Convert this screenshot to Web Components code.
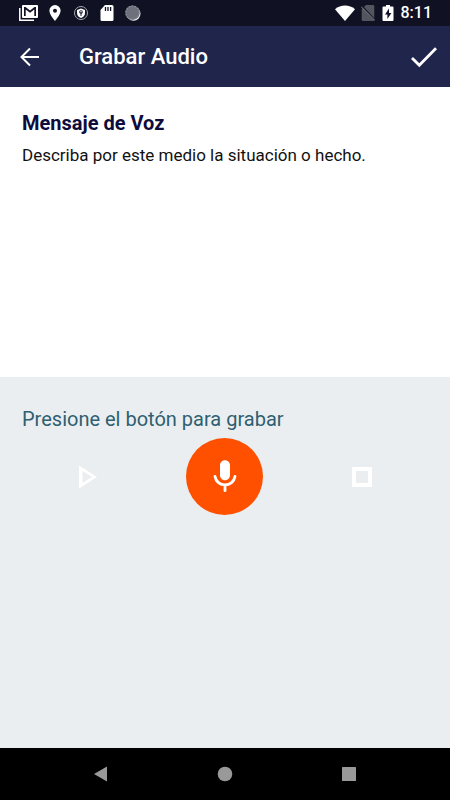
<!DOCTYPE html>
<html lang="es">
<head>
<meta charset="utf-8">
<meta name="viewport" content="width=device-width, initial-scale=1">
<title>Grabar Audio</title>
<style>
html, body { height: 100%; }
body {
  margin: 0;
  font-family: Roboto, "Liberation Sans", sans-serif;
}
</style>
</head>
<body>
<audio-screen></audio-screen>

<script>
function makeTemplate (html) {
  const template = document.createElement('template')
  template.innerHTML = html
  return template
}

function define (name, html) {
  const template = makeTemplate(html)
  customElements.define(name, class extends HTMLElement {
    constructor () {
      super()
      this.attachShadow({ mode: 'open' })
        .appendChild(template.content.cloneNode(true))
    }
  })
}

define('status-bar', `
<style>
:host {
  display: flex;
  justify-content: space-between;
  align-items: center;
  height: 26px;
  padding: 0 18px;
  background: #101223;
  color: #fff;
}
div { display: flex; align-items: center; }
.left { gap: 9px; }
.right { gap: 6px; }
svg { display: block; }
time { font-size: 16px; line-height: 20px; font-weight: 500; }
</style>
<div class="left">
  <svg width="20" height="18" viewBox="0 0 20 18">
    <path fill="none" stroke="#fff" stroke-width="1.500" d="M1.800 4v12.200H16"/>
    <path fill="#fff" fill-rule="evenodd" d="M5 1h14a1 1 0 0 1 1 1v11a1 1 0 0 1-1 1H5a1 1 0 0 1-1-1V2a1 1 0 0 1 1-1zM6 3v9h1.700V5.500L12 8.700l4.300-3.200V12H18V3h-1.500L12 6.500 7.500 3z"/>
  </svg>
  <svg width="16" height="18" viewBox="0 0 16 18">
    <path fill="#fff" fill-rule="evenodd" d="M8 1a5.600 5.600 0 0 0-5.600 5.600C2.400 10.800 8 17 8 17s5.600-6.200 5.600-10.400A5.600 5.600 0 0 0 8 1zm0 3.700a2 2 0 1 1 0 4 2 2 0 0 1 0-4z"/>
  </svg>
  <svg width="18" height="18" viewBox="0 0 18 18">
    <circle cx="9" cy="9" r="6.500" fill="none" stroke="#a5a6ad"/>
    <path fill="#fff" d="M9 4.500l4 1.500v3c0 2.500-1.800 4.200-4 5-2.200-.8-4-2.500-4-5V6z"/>
    <circle cx="9" cy="8" r="1.800" fill="#101223"/>
    <path stroke="#101223" d="M9 9v3"/>
    <circle cx="9" cy="7.800" r=".8" fill="#fff"/>
  </svg>
  <svg width="15" height="18" viewBox="0 0 15 18">
    <path fill="#fff" d="M6 1h7a1.500 1.500 0 0 1 1.500 1.500v13A1.500 1.500 0 0 1 13 17H3a1.500 1.500 0 0 1-1.500-1.500V6z"/>
    <path stroke="#101223" stroke-width="1.300" d="M6.500 3v4M9 3v4M11.600 3v4"/>
  </svg>
  <svg width="18" height="18" viewBox="0 0 18 18">
    <circle cx="10.500" cy="9.800" r="7" fill="#f2f2f4"/>
    <circle cx="9.500" cy="8.700" r="7.200" fill="#6e707c"/>
    <circle cx="9.500" cy="8.700" r="6.600" fill="none" stroke="#8d8f99" stroke-width="1.200" stroke-dasharray="1.500 1.500"/>
  </svg>
</div>
<div class="right">
  <svg width="20" height="18" viewBox="0 0 20 18">
    <path fill="#fff" d="M0 5.200C5.500.4 14.500.4 20 5.200L10 17z"/>
  </svg>
  <svg width="14" height="18" viewBox="0 0 14 18">
    <path fill="#53555f" d="M5 1h7a1.300 1.300 0 0 1 1.300 1.300V17H2a1.300 1.300 0 0 1-1.300-1.300V5.300z"/>
    <path stroke="#101223" stroke-width="1.500" d="M0 1l14 15"/>
    <path stroke="#80818a" stroke-width="1" d="M0 2.500l14 14"/>
  </svg>
  <svg width="14" height="18" viewBox="0 0 14 18">
    <path fill="#fff" d="M5 1h4v1.500h2.500a1 1 0 0 1 1 1V16a1 1 0 0 1-1 1h-9a1 1 0 0 1-1-1V3.500a1 1 0 0 1 1-1H5z"/>
    <path fill="#101223" d="M8 4.500L4 10.500h2.400V15l4-6H8z"/>
  </svg>
  <time>8:11</time>
</div>`)

define('app-bar', `
<style>
:host {
  display: flex;
  align-items: center;
  height: 61px;
  padding: 0 10px 0 16px;
  background: #1f254b;
  color: #fff;
}
button {
  display: block;
  border: 0;
  padding: 0;
  background: none;
  color: inherit;
}
svg { display: block; }
h1 {
  flex: 1;
  margin: 0 0 0 35px;
  font-size: 22px;
  line-height: 29px;
  font-weight: 500;
}
</style>
<button type="button" aria-label="Volver">
  <svg width="28" height="28" viewBox="0 0 28 28" fill="none" stroke="#fff" stroke-width="2">
    <path d="M23 14H6M14 5.500L5.500 14l8.500 8.500"/>
  </svg>
</button>
<h1><slot></slot></h1>
<button type="button" aria-label="Aceptar">
  <svg width="32" height="32" viewBox="0 0 32 32" fill="none" stroke="#fff" stroke-width="2.800">
    <path d="M4 17l7.300 7.300L28 7.300"/>
  </svg>
</button>`)

define('message-intro', `
<style>
:host {
  display: block;
  padding: 24px 22px;
  background: #fff;
}
h2 {
  margin: 0 0 8px;
  font-size: 20px;
  line-height: 24px;
  font-weight: 700;
  color: #0d0c3d;
}
p {
  margin: 0;
  font-size: 17px;
  line-height: 24px;
  color: #111;
}
</style>
<h2><slot name="title"></slot></h2>
<p><slot></slot></p>`)

define('voice-recorder', `
<style>
:host {
  display: block;
  padding: 30px 20px;
  background: #eaeef1;
}
p {
  margin: 0 2px 7px;
  font-size: 20px;
  line-height: 24px;
  color: #2f5f70;
}
.controls {
  display: grid;
  grid-template-columns: repeat(3, 1fr);
  place-items: center;
}
button {
  display: grid;
  place-items: center;
  border: 0;
  padding: 0;
  width: 48px;
  height: 48px;
  background: none;
}
.record {
  width: 77px;
  height: 77px;
  border-radius: 50%;
  background: #ff5000;
}
svg { display: block; }
</style>
<p><slot></slot></p>
<div class="controls">
  <button type="button" aria-label="Reproducir">
    <svg width="40" height="40" viewBox="0 0 40 40">
      <path fill="#fff" fill-rule="evenodd" d="M11 8.500v23L29 20zM14.500 14L24 20l-9.500 6z"/>
    </svg>
  </button>
  <button type="button" class="record" aria-label="Grabar">
    <svg width="40" height="40" viewBox="0 0 24 24" fill="#fff">
      <path d="M12 14c1.660 0 2.990-1.340 2.990-3L15 5c0-1.660-1.340-3-3-3S9 3.340 9 5v6c0 1.660 1.340 3 3 3z"/>
      <path fill="none" stroke="#fff" stroke-width="1.700" stroke-linecap="round" d="M6 11.700c.5 3 3 5 6 5s5.500-2 6-5M12 17v3.200"/>
    </svg>
  </button>
  <button type="button" aria-label="Detener">
    <svg width="40" height="40" viewBox="0 0 40 40" fill="none" stroke="#fff" stroke-width="4">
      <rect x="12" y="12" width="16" height="16"/>
    </svg>
  </button>
</div>`)

define('nav-bar', `
<style>
:host {
  display: grid;
  grid-template-columns: repeat(3, 124px);
  justify-content: center;
  height: 52px;
  background: #000;
}
button {
  display: grid;
  place-items: center;
  border: 0;
  padding: 0;
  background: none;
}
svg { display: block; }
</style>
<button type="button" aria-label="Atrás">
  <svg width="16" height="16" viewBox="0 0 16 16" fill="#999"><path d="M14 .5v15L1 8z"/></svg>
</button>
<button type="button" aria-label="Inicio">
  <svg width="16" height="16" viewBox="0 0 16 16" fill="#999"><circle cx="8" cy="8" r="7.300"/></svg>
</button>
<button type="button" aria-label="Recientes">
  <svg width="16" height="16" viewBox="0 0 16 16" fill="#999"><rect x="1" y="1" width="14" height="14" rx=".6"/></svg>
</button>`)

define('audio-screen', `
<style>
:host {
  display: grid;
  grid-template-rows: auto auto 290fr 371fr auto;
  min-height: 100vh;
}
</style>
<status-bar></status-bar>
<app-bar>Grabar Audio</app-bar>
<message-intro>
  <span slot="title">Mensaje de Voz</span>
  Describa por este medio la situación o hecho.
</message-intro>
<voice-recorder>Presione el botón para grabar</voice-recorder>
<nav-bar></nav-bar>`)
</script>
</body>
</html>
